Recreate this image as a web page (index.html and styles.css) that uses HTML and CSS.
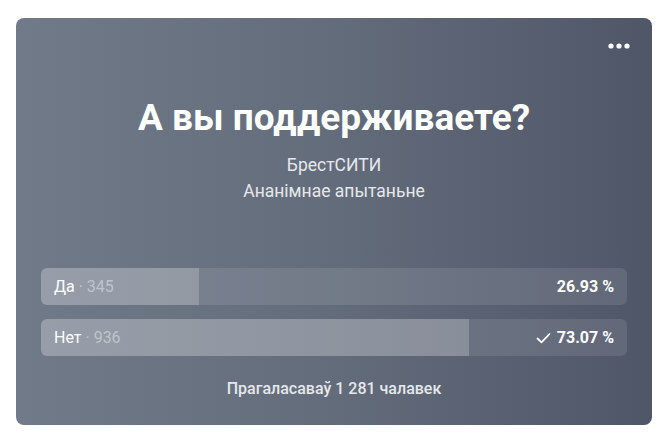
FILE: index.html
```html
<!DOCTYPE html>
<html lang="ru">
<head>
    <meta charset="UTF-8">
    <meta name="viewport" content="width=device-width, initial-scale=1.0">
    <title>Опрос</title>
    <link rel="stylesheet" href="styles.css">
</head>
<body>

    <div class="poll">
        <div class="poll-top">
            <button class="poll-menu" aria-label="Меню">
                <svg width="24" height="8" viewBox="0 0 24 8">
                    <circle cx="4" cy="4" r="2.6" fill="#fff"/>
                    <circle cx="12" cy="4" r="2.6" fill="#fff"/>
                    <circle cx="20" cy="4" r="2.6" fill="#fff"/>
                </svg>
            </button>
        </div>

        <h1 class="poll-title">А вы поддерживаете?</h1>
        <div class="poll-author">БрестСИТИ</div>
        <div class="poll-type">Ананімнае апытаньне</div>

        <div class="poll-answers">
            <div class="answer">
                <div class="answer-fill" style="width: 26.93%"></div>
                <div class="answer-text">
                    <span class="answer-name">Да</span>
                    <span class="answer-count">· 345</span>
                </div>
                <div class="answer-percent">26.93 %</div>
            </div>
            <div class="answer">
                <div class="answer-fill" style="width: 73.07%"></div>
                <div class="answer-text">
                    <span class="answer-name">Нет</span>
                    <span class="answer-count">· 936</span>
                </div>
                <div class="answer-percent">
                    <svg class="check" width="15" height="12" viewBox="0 0 15 12">
                        <path d="M1.5 6.5 L5.5 10.3 L13.5 2" fill="none" stroke="#fff" stroke-width="1.8" stroke-linecap="round" stroke-linejoin="round"/>
                    </svg>
                    73.07 %
                </div>
            </div>
        </div>

        <div class="poll-total">Прагаласаваў 1 281 чалавек</div>
    </div>

</body>
</html>
```

FILE: styles.css
```css
body {
    background-color: #ffffff;
    font-family: Roboto, 'Liberation Sans', sans-serif;
    margin: 0;
    padding: 18px 10px 13px 16px;
}

.poll {
    height: 407px;
    box-sizing: border-box;
    padding: 16px 25px 0;
    background: linear-gradient(90deg, #707a89 0%, #636c7b 50%, #4f5668 100%);
    border-radius: 8px;
    color: #fff;
    text-align: center;
}

.poll-top {
    display: flex;
    justify-content: flex-end;
    height: 24px;
    margin-right: -8px;
}

.poll-menu {
    background: none;
    border: 0;
    padding: 0;
    width: 32px;
    height: 24px;
    display: flex;
    align-items: center;
    justify-content: center;
    cursor: pointer;
}

.poll-title {
    font-size: 37px;
    font-weight: 700;
    line-height: 44px;
    margin: 38px 0 12px;
}

.poll-author,
.poll-type {
    font-size: 17.5px;
    line-height: 26px;
    color: #e6e8eb;
}

.poll-answers {
    display: flex;
    flex-direction: column;
    gap: 14px;
    margin-top: 64px;
}

.answer {
    position: relative;
    display: flex;
    justify-content: space-between;
    align-items: center;
    height: 37px;
    padding: 0 13px;
    border-radius: 6px;
    background-color: rgba(255, 255, 255, 0.1);
    overflow: hidden;
    font-size: 16px;
}

.answer-fill {
    position: absolute;
    left: 0;
    top: 0;
    bottom: 0;
    background-color: rgba(255, 255, 255, 0.2);
}

.answer-text,
.answer-percent {
    position: relative;
}

.answer-count {
    color: rgba(255, 255, 255, 0.42);
}

.answer-percent {
    font-weight: 700;
    display: flex;
    align-items: center;
    gap: 6px;
}

.poll-total {
    margin-top: 23px;
    font-size: 16px;
    font-weight: 500;
    line-height: 19px;
    color: #e6e8eb;
}
```
